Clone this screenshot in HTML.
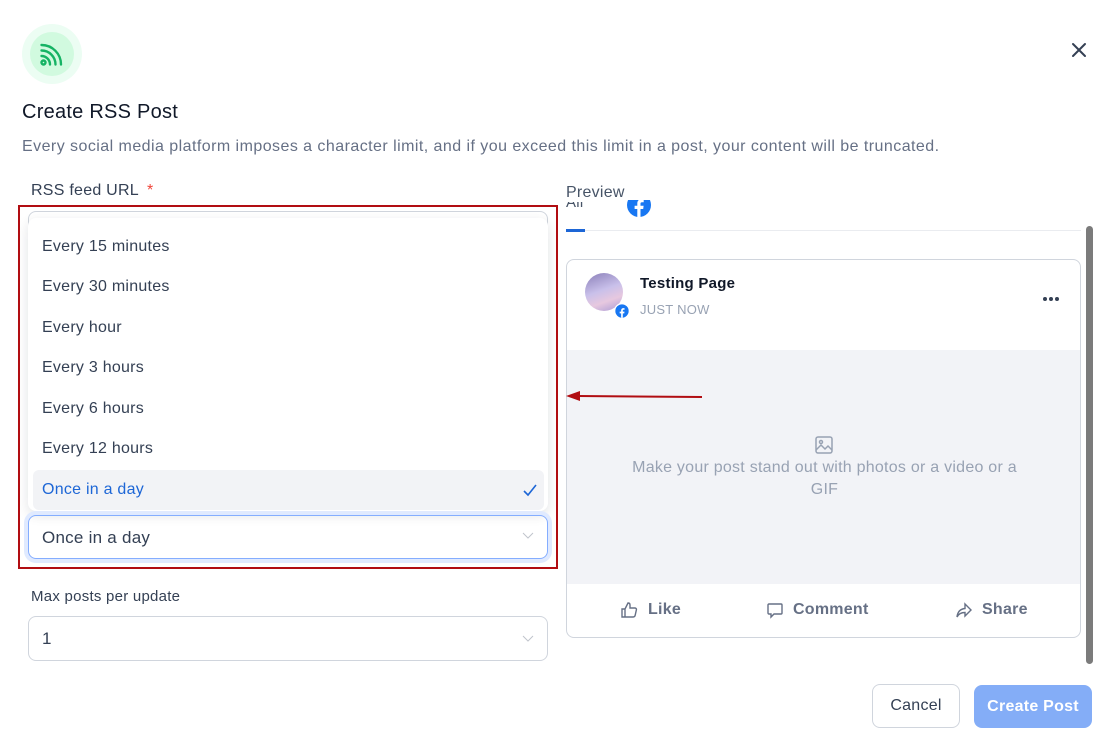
<!DOCTYPE html>
<html><head><style>
*{box-sizing:border-box;margin:0;padding:0}
body{width:1114px;height:746px;background:#fff;font-family:"Liberation Sans",sans-serif;position:relative;overflow:hidden;color:#101828;letter-spacing:0.25px}
.abs{position:absolute}
.opt{position:absolute;left:42px;font-size:16px;color:#344054}
</style></head><body>
<div class="abs" style="left:22px;top:24px;width:60px;height:60px;border-radius:50%;background:#ecfdf3"></div>
<div class="abs" style="left:30px;top:32px;width:44px;height:44px;border-radius:50%;background:#d1fadf"></div>
<svg class="abs" style="left:38px;top:42px" width="26" height="26" viewBox="0 0 26 26" fill="none" stroke="#16b364" stroke-width="2.4" stroke-linecap="round"><circle cx="5.5" cy="20.5" r="2"/><path d="M3.5 14a8.5 8.5 0 0 1 8.5 8.5"/><path d="M3.5 8.5a14 14 0 0 1 14 14"/><path d="M3.5 3a19.5 19.5 0 0 1 19.5 19.5"/></svg>
<svg class="abs" style="left:1071px;top:42px" width="16" height="16" viewBox="0 0 16 16" stroke="#344054" stroke-width="2" stroke-linecap="round"><path d="M2 2l12 12M14 2L2 14"/></svg>
<div class="abs" style="left:22px;top:101px;font-size:20px;color:#101828">Create RSS Post</div>
<div class="abs" style="left:22px;top:138px;font-size:16px;color:#667085;letter-spacing:0.45px;white-space:nowrap">Every social media platform imposes a character limit, and if you exceed this limit in a post, your content will be truncated.</div>
<div class="abs" style="left:31px;top:182px;font-size:16px;color:#344054">RSS feed URL <span style="color:#f04438;margin-left:4px">*</span></div>

<div class="abs" style="left:28px;top:211px;width:520px;height:40px;border:1px solid #d0d5dd;border-radius:8px"></div>
<div class="abs" style="left:28px;top:218px;width:520px;height:293px;background:#fff;border-radius:8px;box-shadow:0 4px 12px rgba(16,24,40,.12)"></div>
<div class="opt" style="top:238px">Every 15 minutes</div>
<div class="opt" style="top:278px">Every 30 minutes</div>
<div class="opt" style="top:319px">Every hour</div>
<div class="opt" style="top:359px">Every 3 hours</div>
<div class="opt" style="top:400px">Every 6 hours</div>
<div class="opt" style="top:440px">Every 12 hours</div>
<div class="abs" style="left:33px;top:470px;width:511px;height:40px;background:#f2f3f6;border-radius:6px"></div>
<div class="opt" style="top:481px;color:#1d66d6">Once in a day</div>
<svg class="abs" style="left:522px;top:482px" width="16" height="16" viewBox="0 0 16 16" fill="none" stroke="#1d66d6" stroke-width="1.6"><path d="M2 9l4 4 8-10"/></svg>
<div class="abs" style="left:28px;top:515px;width:520px;height:44px;border:1px solid #84adff;border-radius:8px;box-shadow:0 0 0 4px #e0eaff"></div>
<div class="opt" style="top:528px;font-size:17px">Once in a day</div>
<svg class="abs" style="left:522px;top:532px" width="12" height="8" viewBox="0 0 12 8" fill="none" stroke="#c0c4cc"><path d="M1 1l5 5 5-5"/></svg>
<div class="abs" style="left:18px;top:205px;width:540px;height:364px;border:2px solid #b10d12"></div>

<div class="abs" style="left:31px;top:588px;font-size:15px;color:#344054">Max posts per update</div>
<div class="abs" style="left:28px;top:616px;width:520px;height:45px;border:1px solid #d0d5dd;border-radius:8px"></div>
<div class="opt" style="top:629px;font-size:17px">1</div>
<svg class="abs" style="left:522px;top:635px" width="12" height="8" viewBox="0 0 12 8" fill="none" stroke="#c0c4cc"><path d="M1 1l5 5 5-5"/></svg>

<div class="abs" style="left:566px;top:199px;font-size:15px;color:#475467;height:13px;overflow:hidden;line-height:15px;padding-top:0"><div style="margin-top:-4px">All</div></div>
<div class="abs" style="left:566px;top:184px;font-size:16px;color:#475467;background:#fff;z-index:2">Preview</div>
<div class="abs" style="left:627px;top:200px;width:24px;height:17px;overflow:hidden"><svg width="24" height="24" viewBox="0 0 24 24" style="margin-top:-7px"><circle cx="12" cy="12" r="12" fill="#1877f2"/><path d="M13.5 24v-8h2.7l.4-3.2h-3.1v-2c0-.9.3-1.5 1.6-1.5h1.6V6.4c-.3 0-1.3-.1-2.4-.1-2.4 0-4 1.4-4 4.1v2.4H7.6V16h2.7v8z" fill="#fff"/></svg></div>
<div class="abs" style="left:566px;top:230px;width:515px;height:1px;background:#eaecf0"></div>
<div class="abs" style="left:566px;top:229px;width:19px;height:3px;background:#1d66d6"></div>
<div class="abs" style="left:1086px;top:226px;width:7px;height:438px;border-radius:4px;background:#7b7b7b"></div>

<div class="abs" style="left:566px;top:259px;width:515px;height:379px;border:1px solid #d0d5dd;border-radius:8px;overflow:hidden">
 <div class="abs" style="left:18px;top:13px;width:38px;height:38px;border-radius:50%;background:linear-gradient(160deg,#8a7fb8,#c9c0ea 45%,#e7c8df 70%,#a99bd5)"></div>
 <svg class="abs" style="left:47px;top:43px" width="16" height="16" viewBox="0 0 24 24"><circle cx="12" cy="12" r="12" fill="#fff"/><circle cx="12" cy="12" r="10" fill="#1877f2"/><path d="M13.2 22v-6.5h2.2l.3-2.6h-2.5v-1.6c0-.7.2-1.2 1.3-1.2h1.3V7.8c-.2 0-1-.1-1.9-.1-1.9 0-3.2 1.2-3.2 3.3v1.9H8.5v2.6h2.2V22z" fill="#fff"/></svg>
 <div class="abs" style="left:73px;top:15px;font-size:15px;font-weight:bold;color:#101828">Testing Page</div>
 <div class="abs" style="left:73px;top:42px;font-size:13px;color:#98a2b3">JUST NOW</div>
 <div class="abs" style="left:476px;top:28px;width:20px"><span style="display:inline-block;width:4px;height:4px;border-radius:50%;background:#344054;margin-right:2px"></span><span style="display:inline-block;width:4px;height:4px;border-radius:50%;background:#344054;margin-right:2px"></span><span style="display:inline-block;width:4px;height:4px;border-radius:50%;background:#344054"></span></div>
 <div class="abs" style="left:0;top:90px;width:515px;height:234px;background:#f2f3f7"></div>
 <svg class="abs" style="left:247px;top:175px" width="20" height="20" viewBox="0 0 20 20" fill="none" stroke="#98a2b3" stroke-width="1.5"><rect x="2" y="2" width="16" height="16" rx="2"/><circle cx="7" cy="7" r="1.5"/><path d="M2 15l5-5 4 4 3-3 4 4"/></svg>
 <div class="abs" style="left:55px;top:197px;width:405px;text-align:center;font-size:16px;line-height:22px;color:#98a2b3">Make your post stand out with photos or a video or a GIF</div>
</div>
<svg class="abs" style="left:620px;top:601px" width="18" height="18" viewBox="0 0 18 18" fill="none" stroke="#667085" stroke-width="1.4"><path d="M2 8h3v8H2zM5 8l3-6c1.5 0 2 1 2 2v3h5c1 0 1.6.8 1.4 1.8l-1.2 5.4c-.2.8-.8 1.8-2 1.8H5"/></svg>
<div class="abs" style="left:648px;top:601px;font-size:16px;font-weight:bold;color:#667085">Like</div>
<svg class="abs" style="left:766px;top:602px" width="18" height="18" viewBox="0 0 18 18" fill="none" stroke="#667085" stroke-width="1.4"><path d="M3 2h12a1 1 0 0 1 1 1v8a1 1 0 0 1-1 1H8l-3 3v-3H3a1 1 0 0 1-1-1V3a1 1 0 0 1 1-1z"/></svg>
<div class="abs" style="left:793px;top:601px;font-size:16px;font-weight:bold;color:#667085">Comment</div>
<svg class="abs" style="left:955px;top:602px" width="18" height="18" viewBox="0 0 18 18" fill="none" stroke="#667085" stroke-width="1.4"><path d="M10 2l6 6-6 6v-3.5C6 10.5 3.5 12 2 15c.5-4.5 3-8 8-8.5z"/></svg>
<div class="abs" style="left:982px;top:601px;font-size:16px;font-weight:bold;color:#667085">Share</div>

<svg class="abs" style="left:560px;top:386px" width="150" height="20"><path d="M18 10 L142 11" stroke="#b10d12" stroke-width="2"/><path d="M6 10 L20 5 L20 15Z" fill="#b10d12"/></svg>

<div class="abs" style="left:872px;top:684px;width:88px;height:44px;border:1px solid #d0d5dd;border-radius:8px;text-align:center;line-height:42px;font-size:16px;color:#344054">Cancel</div>
<div class="abs" style="left:974px;top:685px;width:118px;height:43px;border-radius:8px;background:#84adf7;text-align:center;line-height:43px;font-size:16px;font-weight:bold;color:#fff">Create Post</div>
</body></html>
